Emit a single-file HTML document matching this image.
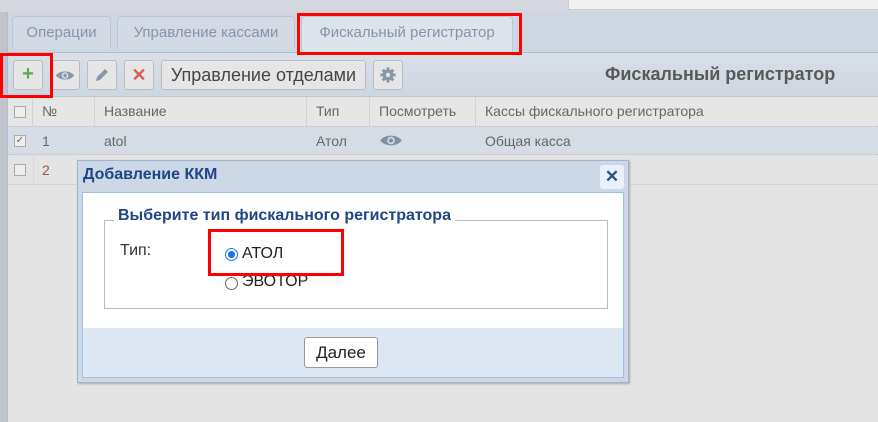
<!DOCTYPE html>
<html><head><meta charset="utf-8"><style>
*{box-sizing:border-box;margin:0;padding:0}
body{width:878px;height:422px;overflow:hidden;background:#e4e4e4;font-family:"Liberation Sans",sans-serif;position:relative}
.a{position:absolute}
.tab{position:absolute;top:16px;height:33px;border:1px solid #b9c6d8;border-bottom:none;border-radius:4px 4px 0 0;background:#d3dae4;color:#8594a8;font-size:15px;line-height:31px;text-align:center}
.btn{position:absolute;top:60px;height:30px;border:1px solid #b8bcc2;border-radius:3px;background:#e6e6e6;text-align:center}
.th{position:absolute;top:97px;height:29px;line-height:29px;font-size:14px;color:#666;border-right:1px solid #d4d4d4;padding-left:9px}
.td{position:absolute;font-size:14px;color:#666;padding-left:9px}
.cb{position:absolute;width:12px;height:12px;border:1px solid #aaa;background:#eee}
</style></head><body>
<div class="a" style="left:0;top:0;width:878px;height:12px;background:#d4d8de"></div>
<div class="a" style="left:568px;top:0;width:310px;height:10px;background:#f0f0f0;border-left:1px solid #ccc;border-bottom:1px solid #ccc"></div>
<div class="a" style="left:0;top:12px;width:7px;height:410px;background:#c0c4ca"></div>
<div class="a" style="left:7px;top:12px;width:1px;height:410px;background:#a9bcd6"></div>
<div class="a" style="left:8px;top:12px;width:870px;height:41px;background:#ced6e1"></div>
<div class="tab" style="left:12px;width:99px">Операции</div>
<div class="tab" style="left:117px;width:178px">Управление кассами</div>
<div class="tab" style="left:301px;width:212px;background:#dde3eb;height:37px">Фискальный регистратор</div>
<div class="a" style="left:8px;top:52px;width:870px;height:1px;background:#a9bcd6"></div>
<div class="a" style="left:8px;top:53px;width:870px;height:44px;background:linear-gradient(#d9dfe7,#cdd5e0)"></div>
<div class="btn" style="left:13px;width:30px;color:#5aa84b;font-size:20px;font-weight:bold;line-height:27px">+</div>
<div class="btn" style="left:50px;width:30px"><svg width="20" height="13" style="margin-top:8px" viewBox="0 0 22 14"><path d="M1 7C5 1 17 1 21 7C17 13 5 13 1 7Z" fill="#8a97ab"/><circle cx="11" cy="7" r="3.5" fill="#e6e6e6"/><circle cx="11" cy="7" r="2" fill="#8a97ab"/></svg></div>
<div class="btn" style="left:87px;width:30px"><svg width="16" height="16" style="margin-top:6px" viewBox="0 0 16 16"><path d="M2 14L3 10L11 2L14 5L6 13Z" fill="#8a97ab"/></svg></div>
<div class="btn" style="left:124px;width:30px;color:#e05a5a;font-size:18px;font-weight:bold;line-height:28px">✕</div>
<div class="btn" style="left:161px;width:205px;font-size:18px;color:#444;line-height:28px">Управление отделами</div>
<div class="btn" style="left:373px;width:30px"><svg width="16" height="16" style="margin-top:6px" viewBox="0 0 16 16"><g fill="#8a97ab"><circle cx="8" cy="8" r="5.5"/><rect x="6.5" y="0.5" width="3" height="15"/><rect x="0.5" y="6.5" width="15" height="3"/><rect x="6.5" y="0.5" width="3" height="15" transform="rotate(45 8 8)"/><rect x="6.5" y="0.5" width="3" height="15" transform="rotate(-45 8 8)"/></g><circle cx="8" cy="8" r="2.2" fill="#e6e6e6"/></svg></div>
<div class="a" style="left:605px;top:64px;font-size:18px;font-weight:bold;color:#595959">Фискальный регистратор</div>
<div class="a" style="left:8px;top:96px;width:870px;height:1px;background:#b9c6d8"></div>
<div class="a" style="left:8px;top:97px;width:870px;height:29px;background:#e6e6e6"></div>
<div class="th" style="left:8px;width:25px"></div>
<div class="cb" style="left:14px;top:106px"></div>
<div class="th" style="left:33px;width:62px">№</div>
<div class="th" style="left:95px;width:212px">Название</div>
<div class="th" style="left:307px;width:63px">Тип</div>
<div class="th" style="left:370px;width:106px">Посмотреть</div>
<div class="th" style="left:476px;width:402px;border:none">Кассы фискального регистратора</div>
<div class="a" style="left:8px;top:126px;width:870px;height:29px;background:#d6dce4;border-top:1px dotted #b9c6d8;border-bottom:1px dotted #b9c6d8"></div>
<div class="cb" style="left:14px;top:135px;font-size:10px;line-height:10px;color:#666;text-align:center">✓</div>
<div class="td" style="left:33px;top:133px">1</div>
<div class="td" style="left:95px;top:133px">atol</div>
<div class="td" style="left:307px;top:133px">Атол</div>
<svg class="a" style="left:379px;top:133px" width="24" height="15" viewBox="0 0 22 14"><path d="M1 7C5 1 17 1 21 7C17 13 5 13 1 7Z" fill="#7f8fa6"/><circle cx="11" cy="7" r="3.5" fill="#d6dce4"/><circle cx="11" cy="7" r="2" fill="#7f8fa6"/></svg>
<div class="td" style="left:476px;top:133px">Общая касса</div>
<div class="a" style="left:8px;top:155px;width:870px;height:30px;background:#e4e4e4;border-bottom:1px solid #d4d4d4"></div>
<div class="a" style="left:33px;top:155px;width:1px;height:30px;background:#d8d8d8"></div>
<div class="cb" style="left:14px;top:164px"></div>
<div class="td" style="left:33px;top:162px;color:#a05050">2</div>
<div class="a" style="left:77px;top:160px;width:552px;height:223px;background:#cdd8e7;border:1px solid #9fb3cf;box-shadow:1px 1px 2px #aaa"></div>
<div class="a" style="left:83px;top:166px;font-size:16px;font-weight:bold;color:#1e4585">Добавление ККМ</div>
<div class="a" style="left:600px;top:165px;width:24px;height:24px;background:#e8f0fa;border-radius:3px;color:#2e4f7a;font-size:17px;font-weight:bold;text-align:center;line-height:24px">✕</div>
<div class="a" style="left:82px;top:192px;width:542px;height:186px;background:#dde6f3;border:1px solid #9ec0e6"></div>
<div class="a" style="left:83px;top:193px;width:540px;height:135px;background:#fff"></div>
<div class="a" style="left:104px;top:220px;width:504px;height:89px;border:1px solid #b8bcc4"></div>
<div class="a" style="left:114px;top:207px;padding:0 4px;background:#fff;font-size:16px;font-weight:bold;color:#1e4585">Выберите тип фискального регистратора</div>
<div class="a" style="left:120px;top:242px;font-size:16px;color:#333">Тип:</div>
<div class="a" style="left:225px;top:248px;width:13px;height:13px;border:1px solid #1a73e8;border-radius:50%;background:#fff"><div style="margin:2px;width:7px;height:7px;border-radius:50%;background:#1a73e8"></div></div>
<div class="a" style="left:242px;top:245px;font-size:16px;color:#222">АТОЛ</div>
<div class="a" style="left:225px;top:277px;width:13px;height:13px;border:1px solid #666;border-radius:50%;background:#fff"></div>
<div class="a" style="left:242px;top:273px;font-size:16px;color:#222">ЭВОТОР</div>
<div class="a" style="left:304px;top:337px;width:74px;height:31px;background:#fff;border:1px solid #999;border-radius:3px;font-size:17px;color:#222;text-align:center;line-height:29px">Далее</div>
<div class="a" style="left:297px;top:13px;width:225px;height:42px;border:3px solid #f00"></div>
<div class="a" style="left:0;top:53px;width:53px;height:45px;border:3px solid #f00"></div>
<div class="a" style="left:208px;top:229px;width:136px;height:47px;border:3px solid #f00"></div>
</body></html>
